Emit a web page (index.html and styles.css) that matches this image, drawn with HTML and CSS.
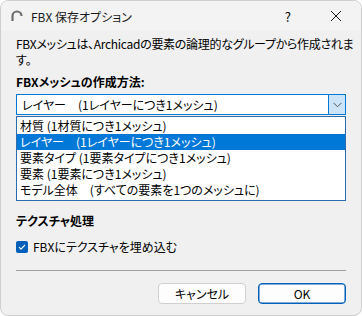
FILE: index.html
```html
<!DOCTYPE html>
<html lang="ja">
<head>
    <meta charset="UTF-8">
    <meta name="viewport" content="width=device-width, initial-scale=1.0">
    <title>FBX 保存オプション</title>
    <link rel="stylesheet" href="styles.css">
</head>
<body>
    <div class="window">
        <div class="titlebar">
            <svg class="app-icon" width="12" height="12" viewBox="0 0 12 12">
                <path d="M1.5 11 V6 A4.5 4.5 0 0 1 10.5 6" fill="none" stroke="#6e6e6e" stroke-width="2.2"/>
            </svg>
            <span class="title">FBX 保存オプション</span>
            <span class="help">?</span>
            <svg class="close" width="12" height="12" viewBox="0 0 12 12">
                <path d="M1 1 L11 11 M11 1 L1 11" stroke="#1a1a1a" stroke-width="1"/>
            </svg>
        </div>

        <div class="content">
            <p class="desc"><span class="nowrap">FBXメッシュは、Archicadの要素の論理的なグループから作成されま</span><br>す。</p>

            <h2 class="label">FBXメッシュの作成方法:</h2>
            <div class="select">
                <span class="select-value">レイヤー　(1レイヤーにつき1メッシュ)</span>
                <span class="select-arrow">
                    <svg width="9" height="6" viewBox="0 0 9 6">
                        <path d="M0.5 0.8 L4.5 4.8 L8.5 0.8" fill="none" stroke="#555" stroke-width="1"/>
                    </svg>
                </span>
            </div>
            <ul class="options">
                <li>材質 (1材質につき1メッシュ)</li>
                <li class="selected">レイヤー　(1レイヤーにつき1メッシュ)</li>
                <li>要素タイプ (1要素タイプにつき1メッシュ)</li>
                <li>要素 (1要素につき1メッシュ)</li>
                <li>モデル全体　(すべての要素を1つのメッシュに)</li>
            </ul>

            <h2 class="label texture">テクスチャ処理</h2>
            <label class="check">
                <span class="box">
                    <svg width="8" height="8" viewBox="0 0 8 8">
                        <path d="M1 4.2 L3 6.2 L7 1.8" fill="none" stroke="#fff" stroke-width="1.1"/>
                    </svg>
                </span>
                <span>FBXにテクスチャを埋め込む</span>
            </label>

            <hr class="sep">

            <div class="buttons">
                <button class="btn">キャンセル</button>
                <button class="btn primary">OK</button>
            </div>
        </div>
    </div>
</body>
</html>
```

FILE: styles.css
```css
body {
    margin: 0;
    background: #ffffff;
    font-family: "Noto Sans CJK JP", "Noto Sans", sans-serif;
    font-size: 12px;
    color: #000;
    font-feature-settings: "palt" 1;
}

.window {
    width: 360px;
    height: 314px;
    border: 1px solid #cfcfcf;
    border-radius: 8px;
    overflow: hidden;
    background: #f0f0f0;
}

.titlebar {
    height: 30px;
    display: flex;
    align-items: center;
    padding-left: 10px;
    background: #f3f3f3;
}

.app-icon {
    margin-right: 8px;
}

.title {
    flex: 1;
    color: #1a1a1a;
}

.help {
    font-size: 13px;
    margin-right: 39px;
}

.close {
    margin-right: 19px;
}

.content {
    padding: 5px 15px 0 15px;
}

.desc {
    margin: 0;
    line-height: 16px;
}

.nowrap {
    white-space: nowrap;
    letter-spacing: -0.3px;
}

.label {
    margin: 6px 0 4px;
    font-size: 12px;
    font-weight: bold;
    line-height: 16px;
}

.select {
    height: 19px;
    display: flex;
    border: 1px solid #0078d7;
    background: #fff;
}

.select-value {
    flex: 1;
    padding-left: 5px;
    line-height: 19px;
}

.select-arrow {
    width: 16px;
    display: flex;
    align-items: center;
    justify-content: center;
    background: #cce4f7;
    border-left: 1px solid #0078d7;
}

.options {
    list-style: none;
    margin: 1px 0 0;
    padding: 1px 0 2px;
    border: 1px solid #2b6cb0;
    background: #fff;
}

.options li {
    height: 16px;
    line-height: 16px;
    padding-left: 3px;
}

.options li.selected {
    background: #0078d7;
    color: #fff;
}

.texture {
    margin: 12px 0 11px;
}

.check {
    display: flex;
    align-items: center;
    gap: 5px;
    height: 14px;
    line-height: 14px;
}

.box {
    width: 12px;
    height: 12px;
    border-radius: 2px;
    background: #005fb8;
    display: flex;
    align-items: center;
    justify-content: center;
}

.sep {
    margin: 16px 0 0;
    height: 0;
    border: none;
    border-top: 1px solid #a0a0a0;
}

.buttons {
    display: flex;
    justify-content: flex-end;
    gap: 12px;
    margin-top: 12px;
}

.btn {
    width: 88px;
    height: 21px;
    padding: 0;
    border: 1px solid #d0d0d0;
    border-radius: 4px;
    background: #fdfdfd;
    font-family: "Noto Sans CJK JP", "Noto Sans", sans-serif;
    font-size: 12px;
    color: #000;
    font-feature-settings: "palt" 1;
}

.btn.primary {
    border: 1px solid #005fb8;
    box-shadow: inset 0 0 0 0.5px #005fb8;
}
```
